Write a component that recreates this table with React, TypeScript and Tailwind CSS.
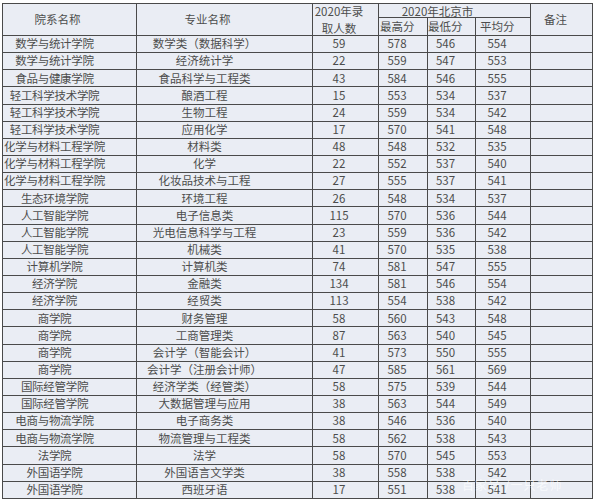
import React from "react";

const rows: [string, string, string, string, string, string][] = [
  ["数学与统计学院", "数学类（数据科学）", "59", "578", "546", "554"],
  ["数学与统计学院", "经济统计学", "22", "559", "547", "553"],
  ["食品与健康学院", "食品科学与工程类", "43", "584", "546", "555"],
  ["轻工科学技术学院", "酿酒工程", "15", "553", "534", "537"],
  ["轻工科学技术学院", "生物工程", "24", "559", "534", "542"],
  ["轻工科学技术学院", "应用化学", "17", "570", "541", "548"],
  ["化学与材料工程学院", "材料类", "48", "548", "532", "535"],
  ["化学与材料工程学院", "化学", "22", "552", "537", "540"],
  ["化学与材料工程学院", "化妆品技术与工程", "27", "555", "537", "541"],
  ["生态环境学院", "环境工程", "26", "548", "534", "537"],
  ["人工智能学院", "电子信息类", "115", "570", "536", "544"],
  ["人工智能学院", "光电信息科学与工程", "23", "559", "536", "542"],
  ["人工智能学院", "机械类", "41", "570", "535", "538"],
  ["计算机学院", "计算机类", "74", "581", "547", "555"],
  ["经济学院", "金融类", "134", "581", "546", "554"],
  ["经济学院", "经贸类", "113", "554", "538", "542"],
  ["商学院", "财务管理", "58", "560", "543", "548"],
  ["商学院", "工商管理类", "87", "563", "540", "545"],
  ["商学院", "会计学（智能会计）", "41", "573", "550", "555"],
  ["商学院", "会计学（注册会计师）", "47", "585", "561", "569"],
  ["国际经管学院", "经济学类（经管类）", "58", "575", "539", "544"],
  ["国际经管学院", "大数据管理与应用", "38", "563", "544", "549"],
  ["电商与物流学院", "电子商务类", "38", "546", "536", "540"],
  ["电商与物流学院", "物流管理与工程类", "58", "562", "538", "543"],
  ["法学院", "法学", "58", "570", "545", "553"],
  ["外国语学院", "外国语言文学类", "38", "558", "538", "542"],
  ["外国语学院", "西班牙语", "17", "551", "538", "541"],
];

const cell = "bg-[#eaedf4] flex items-center whitespace-nowrap";

export default function App() {
  return (
    <div
      className="relative w-[595px] h-[500px] bg-white overflow-hidden text-[#4d4d4d] text-[11.5px]"
      style={{ fontFamily: '"Noto Sans CJK SC", "Noto Sans", sans-serif' }}
    >
      <div className="pt-[3px] pl-[2px]">
        <div className="grid w-max bg-[#4a4a4a] p-px gap-px grid-cols-[133px_175px_65px_48px_47px_54px_61px] grid-rows-[13px_17px_repeat(27,16.15px)] leading-none">
          <div className={`${cell} row-span-2 justify-center pr-[24px]`}>院系名称</div>
          <div className={`${cell} row-span-2 justify-center pr-[34px]`}>专业名称</div>
          <div className={`${cell} row-span-2 flex-col justify-start pr-[13px] pt-[1px]`}>
            <span className="leading-[12px]">2020年录</span>
            <span className="leading-[12px] mt-[5px]">取人数</span>
          </div>
          <div className={`${cell} col-span-3 justify-center pr-[34px] leading-[12px]`}>2020年北京市</div>
          <div className={`${cell} row-span-2 justify-center pr-[12px]`}>备注</div>
          <div className={`${cell} pl-[1px]`}>最高分</div>
          <div className={`${cell} pl-[0px]`}>最低分</div>
          <div className={`${cell} pl-[4px]`}>平均分</div>
          {rows.map((r, i) => (
            <React.Fragment key={i}>
              <div className={`${cell} justify-center pr-[30px] tracking-[-0.3px]`}>{r[0]}</div>
              <div className={`${cell} justify-center pr-[40px]`}>{r[1]}</div>
              <div className={`${cell} justify-center pr-[13px]`}>{r[2]}</div>
              <div className={`${cell} justify-center pr-[12px]`}>{r[3]}</div>
              <div className={`${cell} justify-center pr-[12px]`}>{r[4]}</div>
              <div className={`${cell} justify-center pr-[12px]`}>{r[5]}</div>
              <div className={cell}></div>
            </React.Fragment>
          ))}
        </div>
      </div>
      <div className="absolute left-[462px] top-[476px] text-[12px] text-white/70 whitespace-nowrap tracking-[1px]">
        百家号 /一只老师
      </div>
    </div>
  );
}
